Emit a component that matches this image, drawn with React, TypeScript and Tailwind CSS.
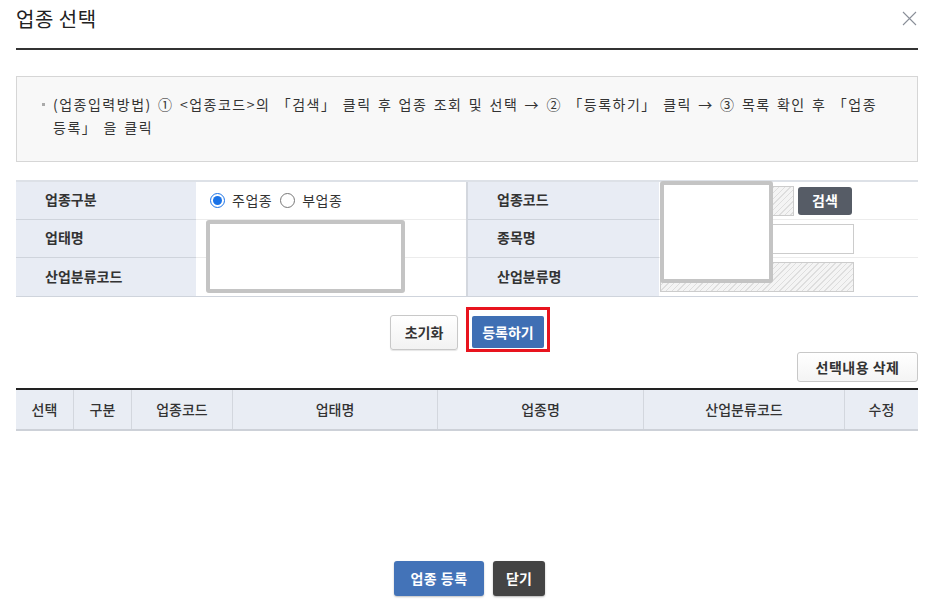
import React from 'react'

const font = { fontFamily: '"Noto Sans CJK KR", "Noto Sans", sans-serif' }

//////////
//■[ 폼 라벨 셀 ]
function Label({ children, wide, last }: { children: React.ReactNode; wide?: boolean; last?: boolean }) {
    return (
        <div
            className={`${wide ? 'w-[193px] border-l-2 border-l-[#d3d7de] pl-[29px]' : 'w-[180px] pl-[29px]'} shrink-0 bg-[#e8ecf4] flex items-center pb-[2px] text-[14px] font-semibold text-[#333] ${last ? '' : 'border-b border-[#cfd4dc]'}`}
        >
            {children}
        </div>
    )
}

function Radio({ checked, label }: { checked?: boolean; label: string }) {
    return (
        <span className="flex items-center gap-[7px] mr-[8px]">
            <span className={`w-[15px] h-[15px] rounded-full border flex items-center justify-center ${checked ? 'border-[#1a73e8]' : 'border-[#777]'}`}>
                {checked && <span className="w-[9px] h-[9px] rounded-full bg-[#1a73e8]" />}
            </span>
            <span className="text-[14px] text-[#333] tracking-[0.5px]">{label}</span>
        </span>
    )
}

const hatch = 'bg-[repeating-linear-gradient(135deg,#f4f4f4_0px,#f4f4f4_3px,#dedede_3px,#dedede_4px)]'

export default function App() {
    return (
        <div className="w-[929px] h-[610px] bg-white pl-[16px] pr-[11px] overflow-hidden" style={font}>

            {/* 헤더 */}
            <div className="h-[50px] flex items-start justify-between border-b-[2px] border-[#333] pt-[5px]">
                <h1 className="text-[20px] leading-[28px] text-[#222] font-normal tracking-[0.5px]">업종 선택</h1>
                <svg className="w-[15px] h-[15px] mt-[6px] mr-[1px]" viewBox="0 0 15 15" fill="none" stroke="#8a8f99" strokeWidth={1.1}>
                    <path d="M1 1l13 13M14 1L1 14" />
                </svg>
            </div>

            {/* 안내 */}
            <div className="mt-[26px] h-[86px] bg-[#f8f8f8] border border-[#d6d6d6] pt-[16px] pl-[25px] pr-[20px] flex text-[14px] leading-[23px] text-[#333]">
                <span className="w-[11px] shrink-0 pt-[10px]">
                    <span className="block w-[3px] h-[3px] bg-[#aaa]" />
                </span>
                <p className="tracking-[1.5px] [word-spacing:1.7px] whitespace-nowrap">
                    (업종입력방법) ① &lt;업종코드&gt;의 「검색」 클릭 후 업종 조회 및 선택 → ② 「등록하기」 클릭 → ③ 목록 확인 후 「업종<br />
                    등록」 을 클릭
                </p>
            </div>

            {/* 입력 폼 */}
            <div className="relative mt-[18px] border-t-2 border-[#dde1e7] border-b border-b-[#cfd4dc]">
                <div className="flex h-[38px]">
                    <Label>업종구분</Label>
                    <div className="w-[270px] flex items-center pl-[14px] pb-[1px] border-b border-[#ececec]">
                        <Radio checked label="주업종" />
                        <Radio label="부업종" />
                    </div>
                    <Label wide>업종코드</Label>
                    <div className="flex-1 flex items-center pl-[1px] border-b border-[#ececec]">
                        <div className={`w-[134px] h-[30px] border border-[#ccc] ${hatch}`} />
                        <button className="ml-[4px] w-[54px] h-[28px] rounded-[3px] bg-[#565c66] text-white text-[14px] font-bold">검색</button>
                    </div>
                </div>
                <div className="flex h-[38px]">
                    <Label>업태명</Label>
                    <div className="w-[270px] flex items-center pl-[14px] border-b border-[#ececec]" />
                    <Label wide>종목명</Label>
                    <div className="flex-1 flex items-center pl-[1px] border-b border-[#ececec]">
                        <div className="w-[194px] h-[30px] border border-[#ccc] bg-white" />
                    </div>
                </div>
                <div className="flex h-[38px]">
                    <Label last>산업분류코드</Label>
                    <div className="w-[270px] flex items-center pl-[14px]" />
                    <Label wide last>산업분류명</Label>
                    <div className="flex-1 flex items-center pl-[1px]">
                        <div className={`w-[194px] h-[30px] border border-[#ccc] ${hatch}`} />
                    </div>
                </div>

                {/* 가림 박스 */}
                <div className="absolute left-[190px] top-[38px] w-[199px] h-[73px] border-[4px] border-[#c4c4c4] rounded-[3px] bg-white" />
                <div className="absolute left-[644px] top-[-1px] w-[113px] h-[102px] border-[4px] border-[#c4c4c4] rounded-[3px] bg-white" />
            </div>

            {/* 버튼 */}
            <div className="flex justify-center items-start gap-[8px] mt-[10px] pl-[6px]">
                <button className="mt-[8px] w-[68px] h-[35px] border border-[#c8c8c8] rounded-[3px] bg-gradient-to-b from-white to-[#f2f2f2] text-[14px] font-bold text-[#333] shadow-[0_1px_1px_rgba(0,0,0,0.1)]">초기화</button>
                <div className="w-[84px] h-[45px] border-[3px] border-[#e8141e] bg-white pt-[6px] px-[3px] pb-[1px]">
                    <button className="w-full h-full bg-[#3f6fb4] rounded-[2px] text-white text-[14px] font-bold">등록하기</button>
                </div>
            </div>

            <div className="flex justify-end">
                <button className="w-[121px] h-[30px] border border-[#c8c8c8] rounded-[3px] bg-gradient-to-b from-white to-[#f4f4f4] text-[14px] font-semibold text-[#333] tracking-[0.5px]">선택내용 삭제</button>
            </div>

            {/* 목록 헤더 */}
            <div className="mt-[6px] border-t-2 border-[#222] border-b-2 border-b-[#cdd1d8] h-[43px] flex bg-[#e9edf4] text-[14px] text-[#333] font-medium">
                {[
                    ['선택', 'w-[57px]'],
                    ['구분', 'w-[58px]'],
                    ['업종코드', 'w-[101px]'],
                    ['업태명', 'w-[205px]'],
                    ['업종명', 'w-[206px]'],
                    ['산업분류코드', 'w-[201px]'],
                    ['수정', 'flex-1'],
                ].map(([t, w], i) => (
                    <div key={t} className={`${w} flex items-center justify-center ${i > 0 ? 'border-l border-[#d3d7de]' : ''}`}>{t}</div>
                ))}
            </div>

            {/* 하단 버튼 */}
            <div className="flex justify-center gap-[9px] mt-[130px] pl-[5px]">
                <button className="w-[90px] h-[35px] rounded-[3px] bg-[#4373b8] text-white text-[14px] font-bold shadow-[0_1px_2px_rgba(0,0,0,0.25)] tracking-[0.5px]">업종 등록</button>
                <button className="w-[52px] h-[35px] rounded-[3px] bg-[#444] text-white text-[14px] font-bold shadow-[0_1px_2px_rgba(0,0,0,0.3)]">닫기</button>
            </div>
        </div>
    )
}
